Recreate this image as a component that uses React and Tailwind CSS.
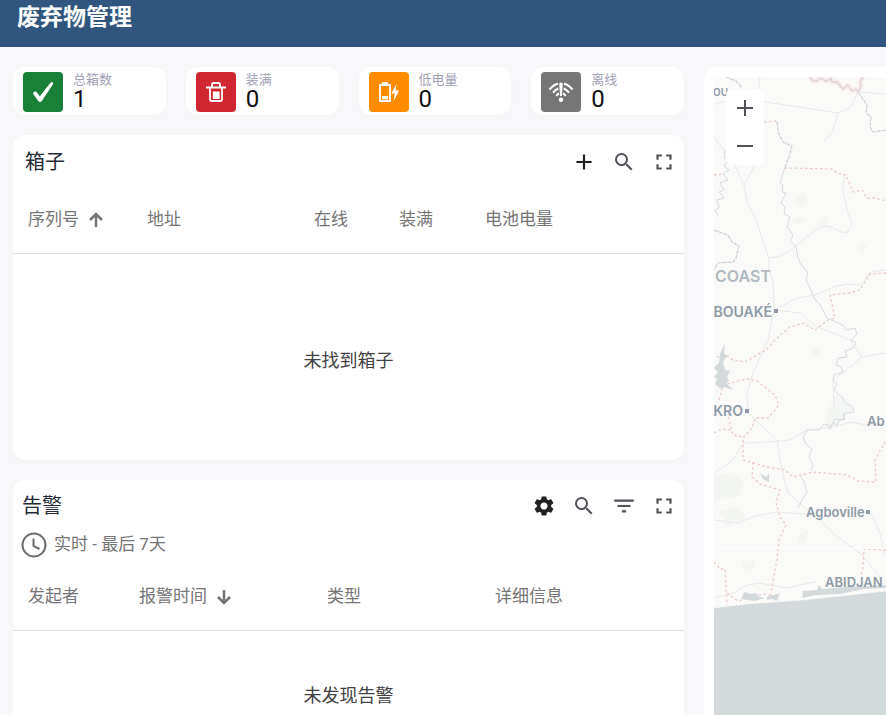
import { MdAdd, MdSearch, MdFullscreen, MdSettings, MdFilterList } from "react-icons/md";

const CheckIcon = () => (
  <svg viewBox="0 0 40 40" className="w-10 h-10">
    <path
      d="M10.200 22Q9.800 20 12 19.600Q13.200 19.500 14 20.500L16.800 24.200L27.500 10.800Q29 9.600 29.900 10.400Q30.500 11.200 29.800 12.500L18.800 29Q17.200 30.800 15.500 29.200Z"
      fill="#fff"
    />
  </svg>
);

const BinIcon = () => (
  <svg viewBox="0 0 40 40" className="w-10 h-10">
    <path d="M10 15.500h20M16 15v-2.500q0-1.500 1.500-1.500h5q1.500 0 1.500 1.500V15M14 16V27.500q0 1.500 1.500 1.500h9q1.500 0 1.500-1.500V16" fill="none" stroke="#fff" strokeWidth="1.800" />
    <path d="M16.800 19.500h6.800v7.500h-6.800z" fill="#fff" />
  </svg>
);

const BatteryIcon = () => (
  <svg viewBox="0 0 40 40" className="w-10 h-10">
    <path d="M11 13h10v16H11z" fill="none" stroke="#fff" strokeWidth="1.800" />
    <path d="M13 10.200h6V13h-6zM13 24h6v3.200h-6z" fill="#fff" />
    <path d="M27.500 11.500l-5 10h3.200l-1 7.500 5.500-10.500h-3.500z" fill="#fff" />
  </svg>
);

const OfflineIcon = () => (
  <svg viewBox="0 0 40 40" className="w-10 h-10">
    <g fill="none" stroke="#fff" strokeWidth="2.100">
      <path d="M8.500 17.500Q12 13 17 11.800M31.500 17.500Q28 13 23 11.800" />
      <path d="M12 20.700Q14.500 17.500 17.300 16.500M28 20.700Q25.500 17.500 22.700 16.500" />
      <path d="M15.300 24Q16.500 22.200 18 21.300M24.700 24Q23.500 22.200 22 21.300" />
    </g>
    <path d="M18.200 11.500q1.800-2 3.600 0L20.900 24h-1.800z" fill="#fff" />
    <circle cx="20" cy="27.700" r="2.200" fill="#fff" />
  </svg>
);

const ClockIcon = () => (
  <svg viewBox="0 0 26 26" className="w-[26px] h-[26px]" fill="none" stroke="#6b6e71" strokeWidth="2">
    <circle cx="13" cy="13" r="11.500" />
    <path d="M12.500 6.500V14L18.500 17" />
  </svg>
);

const SortArrow = ({ down }) => (
  <svg viewBox="0 0 20 20" className="w-5 h-5" fill="none" stroke="currentColor" strokeWidth="2.500">
    <path d={down ? "M10 3V16M4 10L10 16L16 10" : "M10 17V4M4 10L10 4L16 10"} />
  </svg>
);

const stats = [
  { label: "总箱数", value: 1, color: "bg-[#1a8038]", icon: <CheckIcon /> },
  { label: "装满", value: 0, color: "bg-[#d12730]", icon: <BinIcon /> },
  { label: "低电量", value: 0, color: "bg-[#ff8b00]", icon: <BatteryIcon /> },
  { label: "离线", value: 0, color: "bg-[#757575]", icon: <OfflineIcon /> }
];

const StatCard = ({ label, value, color, icon }) => (
  <div className="flex gap-[10px] bg-white rounded-xl shadow-[0_2px_10px_rgba(0,0,0,0.02)] pl-[10px] pt-[5px] pb-[3px]">
    <div className={`w-10 h-10 rounded ${color}`}>{icon}</div>
    <div>
      <p className="text-[13px] leading-4 text-[#a09fb4]">{label}</p>
      <p className="text-2xl leading-[22px] text-[#111111]">{value}</p>
    </div>
  </div>
);

const IconButton = ({ label, className = "text-[#4f5358]", children }) => (
  <button type="button" aria-label={label} className={`w-10 h-10 flex items-center justify-center ${className}`}>
    {children}
  </button>
);

// Column header cell, optionally with the sort arrow
const Th = ({ width, children }) => (
  <th className={`text-left font-normal text-[#757575] text-[17px] pb-[2px] ${width}`}>
    <span className="flex items-center gap-[7px] whitespace-nowrap">{children}</span>
  </th>
);

// Drawn unscaled, a wider panel shows more of it
const RegionMap = () => (
  <svg className="block w-full h-full bg-[#fafaf8]" fill="none" strokeLinejoin="round">
    {/* Land patches */}
    <g fill="#f4f6f4">
      <path d="M83 118l8-2 4 10-9 4-5-5zM107 142l7-4-1 10-7 2zM142 170l7-4 4 5-6 5zM79 142l9-2 3 5-8 3z" />
      <path d="M0 398l18-3 12 10-6 14-24 6zM4 434l20-4 8 12-18 8zM84 457l10-4-2 12-8 2zM28 486l12-4 2 10-12 3zM100 270l8 3-4 7-7-3z" />
      <path d="M112 340l10-24 12 6 6 10-14 14-12 4z" />
    </g>

    {/* Roads */}
    <g stroke="#e8e9e9" strokeWidth="1">
      <path d="M0 27L20 22L51 25L86 30L124 36L136 31L144 15L172 17M124 36L118 56L109 65M46 0L44 14" />
      <path d="M0 60L21 88L30 108L41 88M30 108L33 125L41 140L51 170L55 181L55 193L59 203L60 233L54 263L39 296L33 316L34 336L63 363L66 383L69 398L74 416L93 433L106 443L123 460L146 476L166 500" />
      <path d="M55 181Q68 180 78 172T99 155T119 151T133 156L138 148L133 133L129 113L130 98" />
      <path d="M60 233L83 221L101 218L119 210L133 207L148 208L156 195L172 193M60 233L86 236L103 250L119 256L136 263L148 280L172 276M148 280L133 293L119 303L120 330" />
      <path d="M0 396L19 383L29 366L53 365L76 363L93 353L119 350L136 345L153 348L172 346M0 443L24 446L42 439L62 435L93 437L106 443M157 436L166 456L171 480" />
      <path d="M0 521L20 516L30 509L45 506L72 511L90 507L102 505" />
    </g>

    {/* Rivers */}
    <g stroke="#d7dcdf" strokeWidth="1">
      <path d="M71 90L66 106L69 108L68 115L72 116L67 126L71 130L70 137L76 140L73 150L79 158L76 164L82 170L84 180L86 186L94 196L92 203L97 213L100 221L106 228L113 241L120 244L129 248L132 253L141 251L143 257L137 263L142 266L139 271L131 274L133 280L124 281L122 288L127 290L129 295L120 298L119 303L123 307L120 313L128 320L131 326L139 330L140 335L131 336L129 343L121 342L117 349L110 347L105 353L93 353L89 360L92 367L98 372L95 380L99 388L97 394" />
      <path d="M113 348l3 4 3-6 4 2 3-6 5 1-2-6M86 398l4 7 3 10-5 8-4 8M11 73l-1 8 4 2-4 6 5 4-6 4 5 6-8 3 4 7-5 2 5 6-7 2 2 8-4 2 3 6" />
    </g>

    {/* District borders */}
    <g stroke="#cfcfd6" strokeWidth="1.200" strokeDasharray="4 1">
      <path d="M63 45L64 55L69 65L78 69L75 80L71 90M144 15L153 28L152 36L157 40L156 50L159 55L172 53" />
      <path d="M12 0L22 4L28 11M0 153L14 158L18 165L25 169L22 181L19 185L4 186L0 193" />
    </g>
    <path d="M96 0L99 4L103 4L107 1L111 4L115 3L117 1L118 5L123 5L129 12L134 8L138 14L142 12L144 15L147 9L146 5L149 0" stroke="#f1e6e8" strokeWidth="5" opacity=".6" />
    <path d="M96 0L99 4L103 4L107 1L111 4L115 3L117 1L118 5L123 5L129 12L134 8L138 14L142 12L144 15L147 9L146 5L149 0" stroke="#e3cfd3" strokeWidth="1.300" />
    <g stroke="#ebc9cc" strokeWidth="1.300" strokeDasharray="2.500 2.500">
      <path d="M50 45L63 44M71 91L118 92L123 96L132 98L139 115L148 113L153 121L161 121L172 124M0 98L10 97" />
      <path d="M172 196L156 197L146 213L135 216L116 218L121 241L114 243L101 253L89 246L76 250L61 263L53 272L31 285L19 283L13 279L0 280" />
      <path d="M5 323L9 308L33 302L43 304L61 318L65 328L54 341L41 341L38 351L29 361L29 383L53 390L71 393L79 400L99 395L133 398L144 404L162 405L161 383L172 363" />
      <path d="M14 340L19 358L29 360M0 356L8 352L18 353M39 385L38 400L46 407L66 413L62 426L66 440L72 448L65 463L63 483L58 510L56 521M0 485L6 492L11 492L13 530" />
      <path d="M172 473L150 472L149 490L147 498M13 516L24 524L50 517L64 522" />
    </g>

    {/* Water */}
    <g fill="#d4dadc">
      <path d="M0 531L33 527L89 523L136 518L172 514L2000 400V2000H0z" />
      <path d="M88 521l1-7 14-1 2-5 3 4 22-2 42-2v3l-22 1-24 5-24 1zM27 522l3-7 7 2 5-1 3 4 6 1-10 3zM53 520l13-4-3 8-5-2-5 1z" />
      <path d="M11 266l-1 10 3 3-4 6 2 8 5 1-3 6 2 4-3 2 7 7-9-3-3 2-6-5 2-5-3-2 4-5-4-4 5-5 1-9zM46 396l6 4 3-4v9l-6-3z" />
    </g>
    <path d="M0 531L33 527L89 523L136 518L172 514" stroke="#fafaf8" strokeDasharray="2 2" />
    <path d="M0 471.500H172" stroke="#fff" />

    {/* Place names */}
    <g className="font-['Inter'] font-semibold text-[13px]" fill="#8f9aa7">
      <text x="-1" y="19" className="text-[10px]">OU</text>
      <text x="1" y="205" fill="#b1b9c0" className="text-base">COAST</text>
      <text x="58" y="240" textAnchor="end" className="text-sm">BOUAKÉ</text>
      <text x="29" y="339" textAnchor="end" className="text-sm">KRO</text>
      <text x="153" y="349">Ab</text>
      <text x="92" y="440">Agboville</text>
      <text x="111" y="510">ABIDJAN</text>
      <path d="M60 232h4v4h-4zM31 332h4v4h-4zM152 433h4v4h-4z" />
    </g>
  </svg>
);

const App = () => {
  return (
    <div className="h-screen flex flex-col overflow-hidden bg-[#f8f8fb] font-['Roboto','Noto_Sans_CJK_SC',sans-serif]">

      {/* Header */}
      <header className="shrink-0 bg-[#305680] text-white px-[17px] pt-[2px] pb-[13px]">
        <h1 className="text-[23px] leading-8 font-bold">废弃物管理</h1>
      </header>

      <main className="flex-1 min-h-0 grid grid-cols-[671fr_182fr] grid-rows-[minmax(0,1fr)] gap-5 pt-5 pl-[13px]">

        <div className="min-w-0 flex flex-col gap-5">

          {/* Stats */}
          <div className="shrink-0 grid grid-cols-4 gap-5">
            {stats.map((s) => (
              <StatCard key={s.label} {...s} />
            ))}
          </div>

          {/* Bins */}
          <section className="shrink-0 bg-white rounded-xl shadow-[0_2px_10px_rgba(0,0,0,0.02)]">
            <div className="flex items-center justify-between h-[54px] pl-3">
              <h2 className="text-xl text-[#1f2937]">箱子</h2>
              <div className="flex">
                <IconButton label="添加" className="text-[#212121]"><MdAdd size={26} /></IconButton>
                <IconButton label="搜索"><MdSearch size={24} /></IconButton>
                <IconButton label="全屏"><MdFullscreen size={26} /></IconButton>
              </div>
            </div>
            <table className="w-full table-fixed">
              <thead>
                <tr className="h-16 border-b border-[#e0e0e0]">
                  <Th width="w-[134px] pl-[15px]">序列号 <SortArrow /></Th>
                  <Th width="w-[167px]">地址</Th>
                  <Th width="w-[85px]">在线</Th>
                  <Th width="w-[86px]">装满</Th>
                  <Th>电池电量</Th>
                </tr>
              </thead>
              <tbody>
                <tr>
                  <td colSpan={5} className="h-[207px] pt-2 text-center text-lg text-[#424242]">未找到箱子</td>
                </tr>
              </tbody>
            </table>
          </section>

          {/* Alarms */}
          <section className="shrink-0 bg-white rounded-xl shadow-[0_2px_10px_rgba(0,0,0,0.02)]">
            <div className="flex items-center justify-between h-[52px] pl-[9px]">
              <h2 className="text-xl text-[#1f2937]">告警</h2>
              <div className="flex">
                <IconButton label="设置" className="text-[#212121]"><MdSettings size={24} /></IconButton>
                <IconButton label="搜索"><MdSearch size={24} /></IconButton>
                <IconButton label="筛选"><MdFilterList size={26} /></IconButton>
                <IconButton label="全屏"><MdFullscreen size={26} /></IconButton>
              </div>
            </div>
            <button type="button" className="flex items-center gap-[7px] h-[26px] pl-2 text-[17px] text-[#757575]">
              <ClockIcon />
              实时 - 最后 7天
            </button>
            <table className="w-full table-fixed mt-2">
              <thead>
                <tr className="h-16 border-b border-[#e0e0e0]">
                  <Th width="w-[126px] pl-[15px]">发起者</Th>
                  <Th width="w-[188px]">报警时间 <SortArrow down /></Th>
                  <Th width="w-[168px]">类型</Th>
                  <Th>详细信息</Th>
                </tr>
              </thead>
              <tbody>
                <tr>
                  <td colSpan={4} className="h-[132px] text-center text-lg text-[#424242]">未发现告警</td>
                </tr>
              </tbody>
            </table>
          </section>

        </div>

        {/* Map */}
        <section className="relative min-w-0 min-h-0 bg-white rounded-tl-xl pt-[10px] pl-[10px]">
          <RegionMap />
          <div className="absolute top-[22px] left-[22px] flex flex-col bg-white rounded-md text-[#4f5358]">
            <button type="button" aria-label="放大" className="w-[38px] h-[38px] flex items-center justify-center">
              <svg viewBox="0 0 16 16" className="w-4 h-4" stroke="currentColor" strokeWidth="2"><path d="M0 8h16M8 0v16" /></svg>
            </button>
            <button type="button" aria-label="缩小" className="w-[38px] h-[38px] flex items-center justify-center">
              <svg viewBox="0 0 16 16" className="w-4 h-4" stroke="currentColor" strokeWidth="2"><path d="M0 8h16" /></svg>
            </button>
          </div>
        </section>

      </main>
    </div>
  );
};

export default App;
